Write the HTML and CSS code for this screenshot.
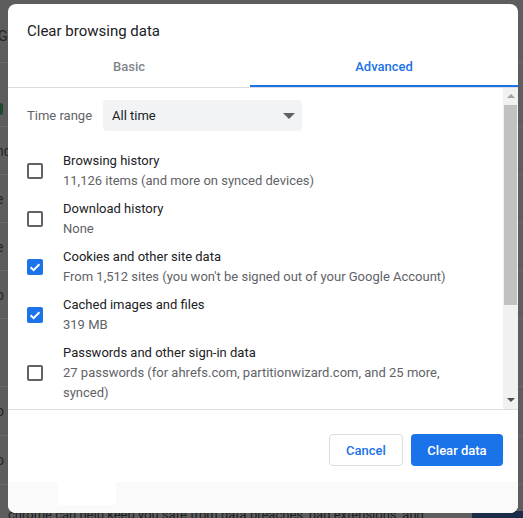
FILE: index.html
```html
<!DOCTYPE html>
<html>
<head>
<meta charset="utf-8">
<link rel="stylesheet" href="styles.css">
</head>
<body>
<div class="page">
  <div class="page-head"><span class="frag frag-go">Go</span></div>
  <div class="page-row r1"><span class="frag frag-dot"></span></div>
  <div class="page-row r2"><span class="frag">nd</span></div>
  <div class="page-row r3"><span class="frag">e</span></div>
  <div class="page-row r3"><span class="frag">e</span></div>
  <div class="page-row r3"><span class="frag">b</span></div>
  <div class="page-row r4"></div>
  <div class="page-row r5"><span class="frag">o</span></div>
  <div class="page-row r5"><span class="frag">o</span></div>
  <div class="page-foot"><span class="foot-text">chrome can help keep you safe from data breaches, bad extensions, and</span><span class="navy"></span></div>
</div>

<div class="dialog">
  <div class="title">Clear browsing data</div>
  <div class="tabs">
    <div class="tab tab-basic">Basic</div>
    <div class="tab tab-adv">Advanced</div>
  </div>
  <div class="body">
    <div class="content">
      <div class="range">
        <span class="range-label">Time range</span>
        <div class="select"><span>All time</span><span class="caret"></span></div>
      </div>
      <div class="items">
        <div class="item">
          <span class="cb"></span>
          <div class="text"><div class="t">Browsing history</div><div class="s">11,126 items (and more on synced devices)</div></div>
        </div>
        <div class="item">
          <span class="cb"></span>
          <div class="text"><div class="t">Download history</div><div class="s">None</div></div>
        </div>
        <div class="item">
          <span class="cb on"><svg viewBox="0 0 16 16" width="16" height="16"><path d="M3.6 8.2 L6.6 11.1 L12.4 5.2" fill="none" stroke="#fff" stroke-width="2"/></svg></span>
          <div class="text"><div class="t">Cookies and other site data</div><div class="s">From 1,512 sites (you won't be signed out of your Google Account)</div></div>
        </div>
        <div class="item">
          <span class="cb on"><svg viewBox="0 0 16 16" width="16" height="16"><path d="M3.6 8.2 L6.6 11.1 L12.4 5.2" fill="none" stroke="#fff" stroke-width="2"/></svg></span>
          <div class="text"><div class="t">Cached images and files</div><div class="s">319 MB</div></div>
        </div>
        <div class="item">
          <span class="cb"></span>
          <div class="text"><div class="t">Passwords and other sign-in data</div><div class="s">27 passwords (for ahrefs.com, partitionwizard.com, and 25 more, synced)</div></div>
        </div>
      </div>
    </div>
    <div class="scrollbar">
      <span class="arr up"></span>
      <span class="thumb"></span>
      <span class="track-fill"></span>
      <span class="arr down"></span>
    </div>
  </div>
  <div class="footer">
    <button class="btn cancel">Cancel</button>
    <button class="btn primary">Clear data</button>
  </div>
  <div class="strip"><span class="strip-block"></span></div>
</div>
</body>
</html>
```
FILE: styles.css
```css
* { box-sizing: border-box; }
html, body { margin: 0; padding: 0; }
body {
  width: 523px;
  height: 518px;
  overflow: hidden;
  background: #5d5d5d;
  font-family: Roboto, "Liberation Sans", Arial, sans-serif;
  position: relative;
}
.page { width: 523px; height: 518px; }
.page-head { height: 63px; border-bottom: 1px solid #6b6b6b; padding-top: 26px; }
.frag { color: #262626; font-size: 14px; line-height: 20px; display: block; margin-left: -4px; }
.frag-go { margin-left: -2px; }
.page-row { border-bottom: 1px solid #6b6b6b; }
.r1 { height: 64px; padding-top: 40px; }
.frag-dot { width: 6px; height: 12px; border-radius: 6px; background: #1f4a2a; margin-left: -3px; }
.r2 { height: 48px; padding-top: 14px; }
.r3 { height: 48px; padding-top: 14px; }
.r4 { height: 68px; }
.r5 { height: 49px; padding-top: 14px; }
.page-foot { height: 30px; position: relative; display: flex; }
.foot-text { color: #1d1d1d; font-size: 13px; padding: 22px 0 0 8px; white-space: nowrap; }
.navy { position: absolute; left: 472px; top: 26px; width: 51px; height: 10px; background: #1c2b48; }

.dialog {
  position: absolute;
  left: 8px;
  top: 4px;
  width: 510px;
  height: 509px;
  background: #fff;
  border-radius: 8px;
  overflow: hidden;
  display: flex;
  flex-direction: column;
}
.title {
  padding: 17px 19px 0;
  font-size: 15px;
  line-height: 20px;
  color: #202124;
  height: 37px;
}
.tabs {
  display: flex;
  height: 47px;
  border-bottom: 1px solid #dadce0;
}
.tab {
  height: 46px;
  padding-top: 16px;
  font-size: 13px;
  font-weight: 500;
  line-height: 20px;
  text-align: center;
  border-bottom: 2px solid transparent;
}
.tab-basic { width: 242px; color: #80868b; }
.tab-adv { flex: 1; color: #1a73e8; border-bottom-color: #1a73e8; }

.body {
  height: 322px;
  display: flex;
  border-bottom: 1px solid #dadce0;
  overflow: hidden;
}
.content { flex: 1; padding: 12px 0 0 19px; overflow: hidden; }
.range { display: flex; align-items: center; height: 31px; }
.range-label { font-size: 13px; color: #5f6368; width: 76px; }
.select {
  width: 199px;
  height: 31px;
  background: #f1f3f4;
  border-radius: 4px;
  display: flex;
  align-items: center;
  justify-content: space-between;
  padding: 0 7px 0 9px;
  font-size: 13px;
  color: #202124;
}
.caret {
  width: 0; height: 0;
  border-left: 6px solid transparent;
  border-right: 6px solid transparent;
  border-top: 6px solid #5f6368;
}
.items { margin-top: 16px; }
.item { display: flex; align-items: center; padding: 4px 24px 4px 0; }
.cb {
  width: 16px; height: 16px;
  border: 2px solid #5f6368;
  border-radius: 2px;
  flex: none;
  margin-right: 20px;
  display: flex;
}
.cb.on { background: #1a73e8; border: none; }
.cb svg { display: block; }
.text { font-size: 13px; line-height: 20px; }
.t { color: #202124; }
.s { color: #5f6368; }

.scrollbar {
  width: 15px;
  flex: none;
  background: #f1f1f1;
  display: flex;
  flex-direction: column;
  align-items: center;
}
.arr { width: 0; height: 0; border-left: 4px solid transparent; border-right: 4px solid transparent; }
.up { border-bottom: 4px solid #a3a3a3; margin-top: 6px; }
.thumb { width: 13px; height: 200px; background: #c1c1c1; margin-top: 7px; }
.track-fill { flex: 1; }
.down { border-top: 4px solid #505050; margin-bottom: 7px; }

.footer {
  height: 72px;
  display: flex;
  justify-content: flex-end;
  gap: 8px;
  padding: 24px 15px 16px 0;
}
.btn {
  height: 32px;
  border-radius: 4px;
  font-family: Roboto, "Liberation Sans", Arial, sans-serif;
  font-size: 13px;
  font-weight: 500;
  padding: 0;
  cursor: pointer;
}
.cancel { width: 74px; background: #fff; border: 1px solid #dadce0; color: #1a73e8; }
.primary { width: 92px; background: #1a73e8; border: none; color: #fff; }
.strip { flex: 1; background: #fafafa; padding-left: 50px; }
.strip-block { display: block; width: 58px; height: 23px; background: #fff; }
```
